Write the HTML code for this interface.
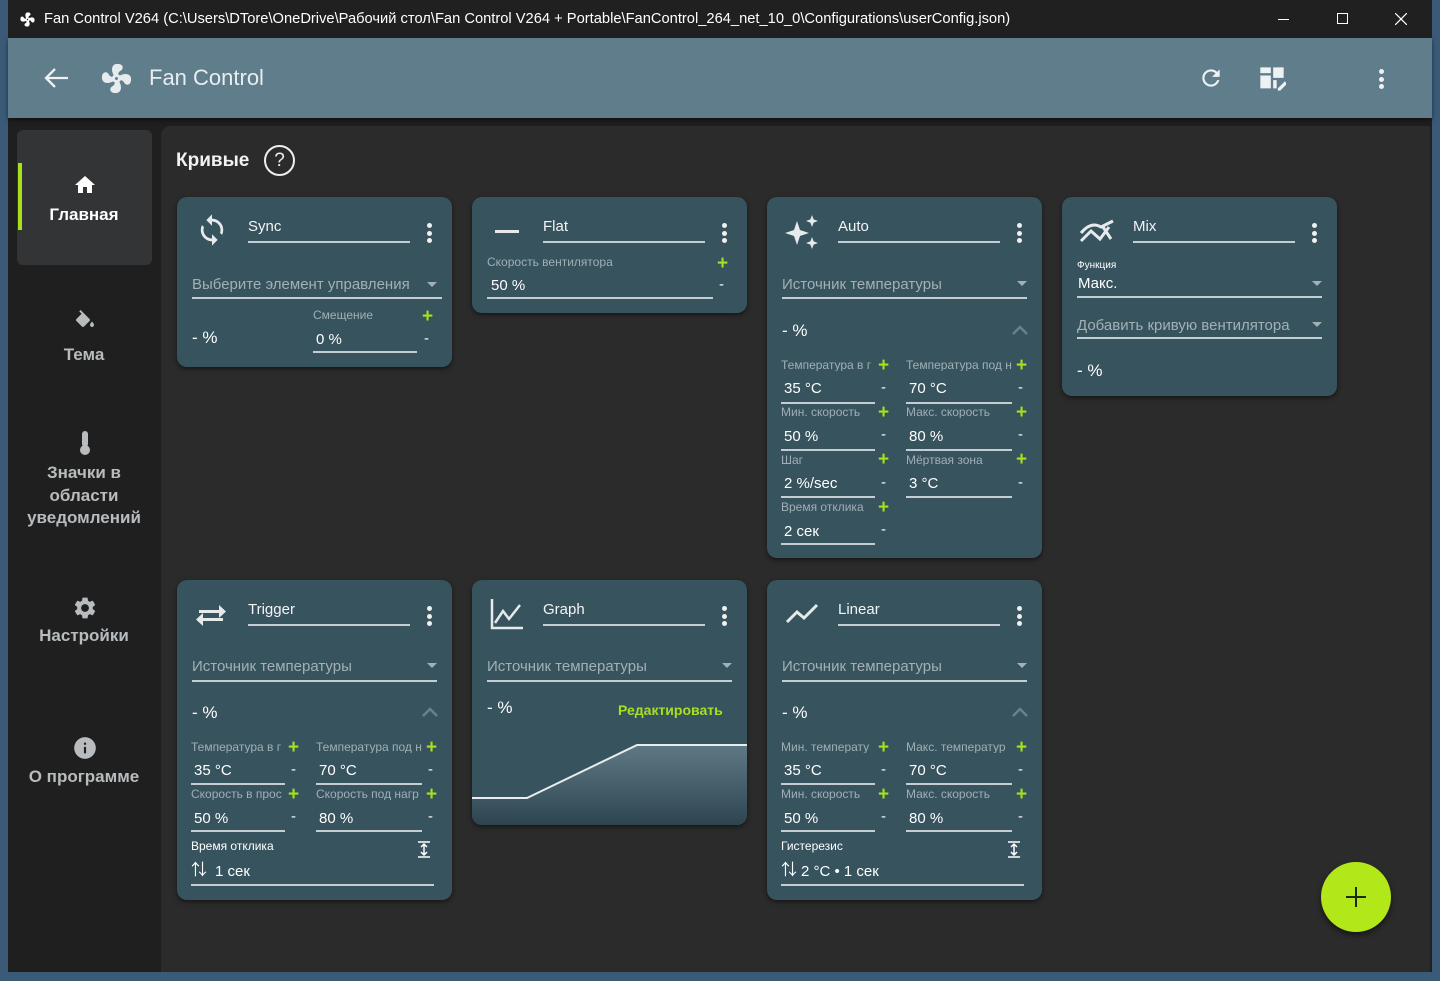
<!DOCTYPE html>
<html><head><meta charset="utf-8">
<style>
*{margin:0;padding:0;box-sizing:border-box}
body{width:1440px;height:981px;overflow:hidden;background:#3a5a78;font-family:"Liberation Sans","Noto Sans CJK SC",sans-serif;position:relative}
.a{position:absolute}
.t{position:absolute;white-space:nowrap;line-height:1}
.card{position:absolute;width:275px;background:#37535e;border-radius:10px;box-shadow:0 2px 5px rgba(0,0,0,.5);overflow:hidden}
.ul{position:absolute;height:2px;background:#c4ced2}
.ttl{font-size:15px;color:#f2f4f5}
.dd{font-size:15px;color:#a3b0b6}
.lbl{font-size:12px;color:#a0afb6;overflow:hidden;width:96px}
.val{font-size:15px;color:#fff}
.pl{font-size:19px;color:#a8e01c;font-weight:bold}
.mi{font-size:15px;color:#fff}
.pc{font-size:17px;color:#fff}
.arr{position:absolute;width:0;height:0;border-left:5px solid transparent;border-right:5px solid transparent;border-top:5px solid #a3b0b6}
.keb{position:absolute;width:4px}
.keb i{display:block;width:5px;height:5px;border-radius:50%;background:#f0f0f0;margin-bottom:2.5px}
.side{font-size:17px;color:#b8bcbe;font-weight:bold;text-align:center;width:152px;left:8px}
.chev{position:absolute}
</style></head><body>
<div class="a" style="left:8px;top:0;width:1424px;height:972px;background:#1f1f1f"></div>
<div class="a" style="left:8px;top:0;width:1424px;height:38px;background:#202020"></div>
<svg class="a" style="left:19px;top:11px" width="17" height="17" viewBox="0 0 24 24"><path fill="#fff" d="M12 11a1 1 0 1 0 0 2 1 1 0 0 0 0-2M12.5 2C17 2 17.1 5.6 14.7 6.8c-1 .5-1.4 1.4-1.6 2.3.5.2.9.5 1.2.9 3.7-2 7.7-1.2 7.7 2.5 0 4.5-3.6 4.6-4.8 2.2-.5-1-1.4-1.4-2.3-1.6-.2.5-.5.9-.9 1.2 2 3.7 1.2 7.7-2.5 7.7-4.5 0-4.6-3.6-2.2-4.8 1-.5 1.4-1.4 1.6-2.3-.5-.2-.9-.5-1.2-.9-3.7 2-7.7 1.2-7.7-2.5 0-4.5 3.6-4.6 4.8-2.2.5 1 1.4 1.4 2.3 1.6.2-.5.5-.9.9-1.2-2-3.7-1.2-7.7 2.5-7.7z"/></svg>
<div class="t" style="left:44px;top:12px;font-size:14.7px;color:#fff">Fan Control V264 (C:\Users\DTore\OneDrive\Рабочий стол\Fan Control V264 + Portable\FanControl_264_net_10_0\Configurations\userConfig.json)</div>
<div class="a" style="left:1278px;top:19px;width:11px;height:1px;background:#fff"></div>
<div class="a" style="left:1337px;top:13px;width:11px;height:11px;border:1px solid #fff"></div>
<svg class="a" style="left:1395px;top:13px" width="12" height="12"><path d="M0 0L12 12M12 0L0 12" stroke="#fff" stroke-width="1.2"/></svg>
<div class="a" style="left:8px;top:38px;width:1424px;height:80px;background:#5f7d8b;box-shadow:0 2px 4px rgba(0,0,0,.5)"></div>
<svg class="a" style="left:44px;top:67px" width="25" height="22" viewBox="0 0 25 22"><path d="M24 11H3M11 2L2 11l9 9" fill="none" stroke="#eef2f4" stroke-width="2.3"/></svg>
<svg class="a" style="left:99px;top:61px" width="35" height="35" viewBox="0 0 24 24"><path fill="#e6ecee" d="M12 11a1 1 0 1 0 0 2 1 1 0 0 0 0-2M12.5 2C17 2 17.1 5.6 14.7 6.8c-1 .5-1.4 1.4-1.6 2.3.5.2.9.5 1.2.9 3.7-2 7.7-1.2 7.7 2.5 0 4.5-3.6 4.6-4.8 2.2-.5-1-1.4-1.4-2.3-1.6-.2.5-.5.9-.9 1.2 2 3.7 1.2 7.7-2.5 7.7-4.5 0-4.6-3.6-2.2-4.8 1-.5 1.4-1.4 1.6-2.3-.5-.2-.9-.5-1.200-.9-3.7 2-7.7 1.2-7.7-2.5 0-4.5 3.6-4.6 4.8-2.2.5 1 1.4 1.4 2.3 1.6.2-.5.5-.9.9-1.2-2-3.7-1.2-7.7 2.5-7.7z"/></svg>
<div class="t" style="left:149px;top:67px;font-size:22px;color:#e8eef0">Fan Control</div>
<svg class="a" style="left:1198px;top:65px" width="26" height="26" viewBox="0 0 24 24"><path fill="#eef2f4" d="M17.65 6.35A7.96 7.96 0 0 0 12 4a8 8 0 1 0 7.73 10h-2.08A6 6 0 1 1 12 6c1.66 0 3.14.69 4.22 1.78L13 11h7V4z"/></svg>
<svg class="a" style="left:1258px;top:65px" width="28" height="28" viewBox="0 0 24 24"><path fill="#eef2f4" d="M2 2h9v5H2zM2 9h9v11H2zM13 2h9v9h-9zM13 13h3v7h-3z"/><path fill="#eef2f4" d="M18 22l-1 0 0-2 6-6 2 2-6 6z"/></svg>
<div class="keb" style="left:1379px;top:69px"><i></i><i></i><i></i></div>
<div class="a" style="left:17px;top:130px;width:135px;height:135px;background:#333435;border-radius:6px"></div>
<div class="a" style="left:18px;top:163px;width:4px;height:67px;background:#a8e01c"></div>
<svg class="a" style="left:72px;top:173px" width="26" height="24" viewBox="0 0 24 24"><path fill="#fff" d="M10 20v-6h4v6h5v-8h3L12 3 2 12h3v8z"/></svg>
<div class="t side" style="top:206px;color:#fff">Главная</div>
<svg class="a" style="left:73px;top:310px" width="24" height="24" viewBox="0 0 24 24"><path fill="#b8bcbe" d="M16.56 8.94 7.62 0 6.21 1.41l2.38 2.38-5.15 5.150a1.49 1.49 0 0 0 0 2.12l5.5 5.5c.29.29.68.44 1.06.44s.77-.15 1.06-.44l5.5-5.5c.59-.58.59-1.53 0-2.12zM19 11.5s-2 2.17-2 3.5c0 1.1.9 2 2 2s2-.9 2-2c0-1.33-2-3.5-2-3.5z"/></svg>
<div class="t side" style="top:346px">Тема</div>
<svg class="a" style="left:77px;top:430px" width="16" height="26" viewBox="0 0 16 26"><rect x="5" y="1" width="6" height="16" rx="3" fill="#b8bcbe"/><circle cx="8" cy="20" r="5" fill="#b8bcbe"/></svg>
<div class="t side" style="top:462px;line-height:22.5px;white-space:normal">Значки в<br>области<br>уведомлений</div>
<svg class="a" style="left:72px;top:595px" width="26" height="26" viewBox="0 0 24 24"><path fill="#b8bcbe" d="M19.14 12.94a7 7 0 0 0 0-1.88l2.03-1.58a.5.5 0 0 0 .12-.61l-1.92-3.32a.5.5 0 0 0-.59-.22l-2.39.96a7 7 0 0 0-1.62-.94l-.36-2.54a.48.48 0 0 0-.48-.41h-3.84a.48.48 0 0 0-.47.41l-.36 2.54a7 7 0 0 0-1.62.94l-2.39-.96a.48.48 0 0 0-.59.22L2.74 8.87a.48.48 0 0 0 .12.61l2.03 1.58a7 7 0 0 0 0 1.880l-2.03 1.58a.5.5 0 0 0-.12.61l1.92 3.32c.12.22.37.29.59.22l2.39-.96c.5.38 1.03.7 1.62.94l.36 2.54c.05.24.24.41.48.41h3.84c.24 0 .44-.17.47-.41l.36-2.54a7 7 0 0 0 1.62-.94l2.39.96c.22.08.47 0 .59-.22l1.92-3.32a.48.48 0 0 0-.12-.61zM12 15.6A3.6 3.6 0 1 1 12 8.4a3.6 3.6 0 0 1 0 7.2z"/></svg>
<div class="t side" style="top:627px">Настройки</div>
<svg class="a" style="left:72px;top:735px" width="26" height="26" viewBox="0 0 24 24"><path fill="#b8bcbe" d="M12 2a10 10 0 1 0 0 20 10 10 0 0 0 0-20zm1 15h-2v-6h2zm0-8h-2V7h2z"/></svg>
<div class="t side" style="top:768px">О программе</div>
<div class="a" style="left:161px;top:126px;width:1269px;height:846px;background:#2b2b2b;border-radius:10px 0 0 0"></div>
<div class="t" style="left:176px;top:151px;font-size:19px;font-weight:bold;color:#f2f2f2">Кривые</div>
<div class="a" style="left:264px;top:145px;width:31px;height:31px;border:2px solid #eee;border-radius:50%;color:#eee;font-size:19px;text-align:center;line-height:27px">?</div>

<div class="card" style="left:177px;top:197px;height:170px">
<svg class="a" style="left:18px;top:16px" width="34" height="34" viewBox="0 0 24 24"><path fill="#e6eaec" d="M12 4V1L8 5l4 4V6a6 6 0 0 1 5.65 8.02l1.46 1.46A8 8 0 0 0 12 4zm0 14a6 6 0 0 1-5.65-8.02L4.89 8.52A8 8 0 0 0 12 20v3l4-4-4-4z"/></svg>
<div class="t ttl" style="left:71px;top:22px">Sync</div><div class="ul" style="left:71px;top:44px;width:162px;height:1.5px"></div>
<div class="keb" style="left:250px;top:26px"><i></i><i></i><i></i></div>
<div class="t dd" style="left:15px;top:80px">Выберите элемент управления</div><div class="arr" style="left:250px;top:85px"></div><div class="ul" style="left:15px;top:100px;width:250px"></div>
<div class="t pc" style="left:15px;top:132px">- %</div>
<div class="t lbl" style="left:136px;top:112px">Смещение</div><div class="t pl" style="left:245px;top:110px">+</div>
<div class="t val" style="left:139px;top:135px">0 %</div><div class="t mi" style="left:247px;top:134px">-</div><div class="ul" style="left:136px;top:154px;width:104px"></div>
</div>

<div class="card" style="left:472px;top:197px;height:116px">
<div class="a" style="left:23px;top:33px;width:24px;height:3px;background:#e6eaec"></div>
<div class="t ttl" style="left:71px;top:22px">Flat</div><div class="ul" style="left:71px;top:44px;width:162px;height:1.5px"></div>
<div class="keb" style="left:250px;top:26px"><i></i><i></i><i></i></div>
<div class="t lbl" style="left:15px;top:59px;width:200px">Скорость вентилятора</div><div class="t pl" style="left:245px;top:57px">+</div>
<div class="t val" style="left:19px;top:81px">50 %</div><div class="t mi" style="left:247px;top:80px">-</div><div class="ul" style="left:15px;top:100px;width:226px"></div>
</div>

<div class="card" style="left:767px;top:197px;height:361px">
<svg class="a" style="left:16px;top:16px" width="40" height="40" viewBox="0 0 40 40"><path fill="#e6eaec" d="M14 8l3 9 9 3-9 3-3 9-3-9-9-3 9-3zM29 2l1.6 4.4L35 8l-4.4 1.6L29 14l-1.6-4.4L23 8l4.4-1.6zM29 24l1.6 4.4L35 30l-4.4 1.6L29 36l-1.6-4.4L23 30l4.4-1.6z"/></svg>
<div class="t ttl" style="left:71px;top:22px">Auto</div><div class="ul" style="left:71px;top:44px;width:162px;height:1.5px"></div>
<div class="keb" style="left:250px;top:26px"><i></i><i></i><i></i></div>
<div class="t dd" style="left:15px;top:80px">Источник температуры</div><div class="arr" style="left:250px;top:84px"></div><div class="ul" style="left:15px;top:100px;width:245px"></div>
<div class="t pc" style="left:15px;top:125px">- %</div><svg class="chev" style="left:245px;top:128px" width="16" height="10"><path d="M1 9l7-7 7 7" fill="none" stroke="#6b818a" stroke-width="2.5"/></svg>
<div class="t lbl" style="left:14px;top:162px">Температура в г</div><div class="t pl" style="left:111px;top:159px">+</div>
<div class="t val" style="left:17px;top:184px">35 °C</div><div class="t mi" style="left:114px;top:183px">-</div><div class="ul" style="left:14px;top:205px;width:94px"></div>
<div class="t lbl" style="left:139px;top:162px;width:108px">Температура под н</div><div class="t pl" style="left:249px;top:159px">+</div>
<div class="t val" style="left:142px;top:184px">70 °C</div><div class="t mi" style="left:251px;top:183px">-</div><div class="ul" style="left:139px;top:205px;width:106px"></div>
<div class="t lbl" style="left:14px;top:209px">Мин. скорость</div><div class="t pl" style="left:111px;top:206px">+</div>
<div class="t val" style="left:17px;top:232px">50 %</div><div class="t mi" style="left:114px;top:230px">-</div><div class="ul" style="left:14px;top:252px;width:94px"></div>
<div class="t lbl" style="left:139px;top:209px">Макс. скорость</div><div class="t pl" style="left:249px;top:206px">+</div>
<div class="t val" style="left:142px;top:232px">80 %</div><div class="t mi" style="left:251px;top:230px">-</div><div class="ul" style="left:139px;top:252px;width:106px"></div>
<div class="t lbl" style="left:14px;top:257px">Шаг</div><div class="t pl" style="left:111px;top:253px">+</div>
<div class="t val" style="left:17px;top:279px">2 %/sec</div><div class="t mi" style="left:114px;top:278px">-</div><div class="ul" style="left:14px;top:299px;width:94px"></div>
<div class="t lbl" style="left:139px;top:257px">Мёртвая зона</div><div class="t pl" style="left:249px;top:253px">+</div>
<div class="t val" style="left:142px;top:279px">3 °C</div><div class="t mi" style="left:251px;top:278px">-</div><div class="ul" style="left:139px;top:299px;width:106px"></div>
<div class="t lbl" style="left:14px;top:304px">Время отклика</div><div class="t pl" style="left:111px;top:301px">+</div>
<div class="t val" style="left:17px;top:327px">2 сек</div><div class="t mi" style="left:114px;top:325px">-</div><div class="ul" style="left:14px;top:346px;width:94px"></div>
</div>

<div class="card" style="left:1062px;top:197px;height:199px">
<svg class="a" style="left:17px;top:22px" width="36" height="24" viewBox="0 0 36 24"><path fill="none" stroke="#e6eaec" stroke-width="3" d="M2 14Q12 2 22 8L34 2M2 22l10-10 9 8 9-12M24 8l8 12"/></svg>
<div class="t ttl" style="left:71px;top:22px">Mix</div><div class="ul" style="left:71px;top:44px;width:162px;height:1.5px"></div>
<div class="keb" style="left:250px;top:26px"><i></i><i></i><i></i></div>
<div class="t" style="left:15px;top:64px;font-size:10px;color:#fff">Функция</div>
<div class="t" style="left:16px;top:79px;font-size:15px;color:#fff">Макс.</div><div class="arr" style="left:250px;top:84px"></div><div class="ul" style="left:15px;top:99px;width:245px"></div>
<div class="t dd" style="left:15px;top:121px">Добавить кривую вентилятора</div><div class="arr" style="left:250px;top:125px"></div><div class="ul" style="left:15px;top:140px;width:245px"></div>
<div class="t pc" style="left:15px;top:165px">- %</div>
</div>

<div class="card" style="left:177px;top:580px;height:320px">
<svg class="a" style="left:18px;top:22px" width="32" height="26" viewBox="0 0 32 26"><path fill="#e6eaec" d="M4 8h20V3l7 6.5-7 6.5v-5H4zM28 16H8v-5l-7 6.5L8 24v-5h20z"/></svg>
<div class="t ttl" style="left:71px;top:22px">Trigger</div><div class="ul" style="left:71px;top:44px;width:162px;height:1.5px"></div>
<div class="keb" style="left:250px;top:26px"><i></i><i></i><i></i></div>
<div class="t dd" style="left:15px;top:79px">Источник температуры</div><div class="arr" style="left:250px;top:83px"></div><div class="ul" style="left:15px;top:100px;width:245px"></div>
<div class="t pc" style="left:15px;top:124px">- %</div><svg class="chev" style="left:245px;top:127px" width="16" height="10"><path d="M1 9l7-7 7 7" fill="none" stroke="#6b818a" stroke-width="2.5"/></svg>
<div class="t lbl" style="left:14px;top:161px">Температура в г</div><div class="t pl" style="left:111px;top:158px">+</div>
<div class="t val" style="left:17px;top:183px">35 °C</div><div class="t mi" style="left:114px;top:182px">-</div><div class="ul" style="left:14px;top:203px;width:94px"></div>
<div class="t lbl" style="left:139px;top:161px;width:108px">Температура под н</div><div class="t pl" style="left:249px;top:158px">+</div>
<div class="t val" style="left:142px;top:183px">70 °C</div><div class="t mi" style="left:251px;top:182px">-</div><div class="ul" style="left:139px;top:203px;width:106px"></div>
<div class="t lbl" style="left:14px;top:208px">Скорость в прос</div><div class="t pl" style="left:111px;top:205px">+</div>
<div class="t val" style="left:17px;top:231px">50 %</div><div class="t mi" style="left:114px;top:229px">-</div><div class="ul" style="left:14px;top:250px;width:94px"></div>
<div class="t lbl" style="left:139px;top:208px;width:108px">Скорость под нагр</div><div class="t pl" style="left:249px;top:205px">+</div>
<div class="t val" style="left:142px;top:231px">80 %</div><div class="t mi" style="left:251px;top:229px">-</div><div class="ul" style="left:139px;top:250px;width:106px"></div>
<div class="t" style="left:14px;top:260px;font-size:12px;color:#fff">Время отклика</div>
<svg class="a" style="left:240px;top:261px" width="14" height="17"><path d="M1 1h12M1 16h12M7 3v11M4 6l3-3 3 3M4 11l3 3 3-3" fill="none" stroke="#fff" stroke-width="1.5"/></svg>
<div class="t" style="left:14px;top:283px;font-size:16px;color:#fff">⇅</div>
<div class="t val" style="left:38px;top:284px">1 сек</div><div class="ul" style="left:14px;top:304px;width:243px"></div>
</div>

<div class="card" style="left:472px;top:580px;height:245px">
<svg class="a" style="left:18px;top:18px" width="34" height="32" viewBox="0 0 34 32"><path fill="none" stroke="#e6eaec" stroke-width="2.5" d="M2 1v29h31M5 25l8-12 6 8 11-14"/></svg>
<div class="t ttl" style="left:71px;top:22px">Graph</div><div class="ul" style="left:71px;top:44px;width:162px;height:1.5px"></div>
<div class="keb" style="left:250px;top:26px"><i></i><i></i><i></i></div>
<div class="t dd" style="left:15px;top:79px">Источник температуры</div><div class="arr" style="left:250px;top:83px"></div><div class="ul" style="left:15px;top:100px;width:245px"></div>
<div class="t pc" style="left:15px;top:119px">- %</div>
<div class="t" style="left:146px;top:123px;font-size:14px;font-weight:bold;color:#a8e01c">Редактировать</div>
<svg class="a" style="left:0;top:160px" width="275" height="85"><defs><linearGradient id="g" x1="0" y1="0" x2="0" y2="1"><stop offset="0" stop-color="#5e7985"/><stop offset="1" stop-color="#2e4550"/></linearGradient></defs><path d="M0 58H55L165 5H275V85H0z" fill="url(#g)"/><path d="M0 58H55L165 5H275" fill="none" stroke="#e8ecee" stroke-width="2"/></svg>
</div>

<div class="card" style="left:767px;top:580px;height:320px">
<svg class="a" style="left:18px;top:22px" width="34" height="24" viewBox="0 0 34 24"><path fill="none" stroke="#e6eaec" stroke-width="3" d="M2 20l10-10 7 6L32 3"/></svg>
<div class="t ttl" style="left:71px;top:22px">Linear</div><div class="ul" style="left:71px;top:44px;width:162px;height:1.5px"></div>
<div class="keb" style="left:250px;top:26px"><i></i><i></i><i></i></div>
<div class="t dd" style="left:15px;top:79px">Источник температуры</div><div class="arr" style="left:250px;top:83px"></div><div class="ul" style="left:15px;top:100px;width:245px"></div>
<div class="t pc" style="left:15px;top:124px">- %</div><svg class="chev" style="left:245px;top:127px" width="16" height="10"><path d="M1 9l7-7 7 7" fill="none" stroke="#6b818a" stroke-width="2.5"/></svg>
<div class="t lbl" style="left:14px;top:161px">Мин. температу</div><div class="t pl" style="left:111px;top:158px">+</div>
<div class="t val" style="left:17px;top:183px">35 °C</div><div class="t mi" style="left:114px;top:182px">-</div><div class="ul" style="left:14px;top:203px;width:94px"></div>
<div class="t lbl" style="left:139px;top:161px;width:108px">Макс. температур</div><div class="t pl" style="left:249px;top:158px">+</div>
<div class="t val" style="left:142px;top:183px">70 °C</div><div class="t mi" style="left:251px;top:182px">-</div><div class="ul" style="left:139px;top:203px;width:106px"></div>
<div class="t lbl" style="left:14px;top:208px">Мин. скорость</div><div class="t pl" style="left:111px;top:205px">+</div>
<div class="t val" style="left:17px;top:231px">50 %</div><div class="t mi" style="left:114px;top:229px">-</div><div class="ul" style="left:14px;top:250px;width:94px"></div>
<div class="t lbl" style="left:139px;top:208px">Макс. скорость</div><div class="t pl" style="left:249px;top:205px">+</div>
<div class="t val" style="left:142px;top:231px">80 %</div><div class="t mi" style="left:251px;top:229px">-</div><div class="ul" style="left:139px;top:250px;width:106px"></div>
<div class="t" style="left:14px;top:260px;font-size:12px;color:#fff">Гистерезис</div>
<svg class="a" style="left:240px;top:261px" width="14" height="17"><path d="M1 1h12M1 16h12M7 3v11M4 6l3-3 3 3M4 11l3 3 3-3" fill="none" stroke="#fff" stroke-width="1.5"/></svg>
<div class="t" style="left:14px;top:283px;font-size:16px;color:#fff">⇅</div>
<div class="t val" style="left:34px;top:284px">2 °C • 1 сек</div><div class="ul" style="left:14px;top:304px;width:243px"></div>
</div>

<div class="a" style="left:1321px;top:862px;width:70px;height:70px;border-radius:50%;background:#b2e81a;box-shadow:0 3px 6px rgba(0,0,0,.5)"></div>
<div class="a" style="left:1346px;top:896px;width:20px;height:2px;background:#1d2a10"></div>
<div class="a" style="left:1355px;top:887px;width:2px;height:20px;background:#1d2a10"></div>
</body></html>
